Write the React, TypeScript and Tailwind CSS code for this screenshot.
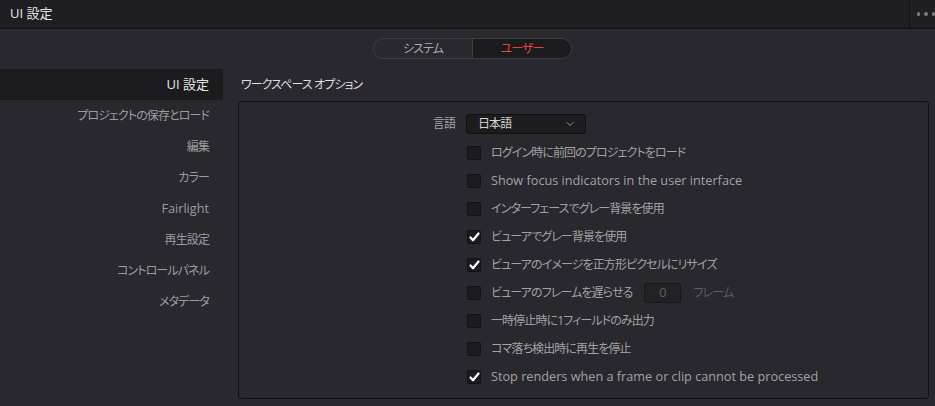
import { ChevronDown } from "lucide-react";

const font = { fontFamily: '"Open Sans", "Noto Sans CJK JP", sans-serif' };

// Japanese labels are set a touch tighter than the Latin ones
const isJp = (s: string) => /[\u3040-\u30ff\u4e00-\u9fff]/.test(s) && !s.startsWith("UI");
const jp = "text-[12px] tracking-[-0.9px]";

const sideItems = [
  "UI 設定",
  "プロジェクトの保存とロード",
  "編集",
  "カラー",
  "Fairlight",
  "再生設定",
  "コントロールパネル",
  "メタデータ",
];

const options: { label: string; checked: boolean; frames?: boolean }[] = [
  { label: "ログイン時に前回のプロジェクトをロード", checked: false },
  { label: "Show focus indicators in the user interface", checked: false },
  { label: "インターフェースでグレー背景を使用", checked: false },
  { label: "ビューアでグレー背景を使用", checked: true },
  { label: "ビューアのイメージを正方形ピクセルにリサイズ", checked: true },
  { label: "ビューアのフレームを遅らせる", checked: false, frames: true },
  { label: "一時停止時に1フィールドのみ出力", checked: false },
  { label: "コマ落ち検出時に再生を停止", checked: false },
  { label: "Stop renders when a frame or clip cannot be processed", checked: true },
];

function Checkbox({ checked }: { checked: boolean }) {
  return (
    <div className="w-[14px] h-[14px] rounded-[2px] bg-[#1c1c1e] border border-[#121214] flex items-center justify-center shrink-0">
      {checked && (
        <svg width="11" height="10" viewBox="0 0 11 10">
          <path d="M1.5 5.5 L4 8.3 L9.5 1.5" stroke="#fff" strokeWidth="2.2" fill="none" strokeLinecap="round" strokeLinejoin="round" />
        </svg>
      )}
    </div>
  );
}

export default function App() {
  return (
    <div
      className="w-[935px] h-[406px] bg-[#28282e] text-[#a7a7a9] overflow-hidden flex flex-col text-[12.7px] [font-feature-settings:'palt']"
      style={font}
    >
      {/* title bar */}
      <div className="h-[29px] bg-[#1f1f23] border-b border-[#121214] flex items-stretch shrink-0">
        <div className="flex-1 flex items-center pl-[10px] text-[13px] text-[#e6e6e6]">UI 設定</div>
        <div className="w-[26px] border-l border-[#121214] flex items-center gap-[4px] pl-[7px]">
          <span className="w-[4px] h-[4px] rounded-full bg-[#7d7d80]" />
          <span className="w-[4px] h-[4px] rounded-full bg-[#7d7d80]" />
          <span className="w-[4px] h-[4px] rounded-full bg-[#7d7d80]" />
        </div>
      </div>

      {/* segmented switch */}
      <div className="flex justify-center pt-[9px] pl-[10px]">
        <div className={`flex h-[21px] w-[199px] rounded-full border border-[#3c3c42] overflow-hidden ${jp}`}>
          <div className="w-[99px] flex items-center justify-center text-[#a9a9ab] border-r border-[#3c3c42]">システム</div>
          <div className="flex-1 flex items-center justify-center bg-[#1b1b1e] text-[#e6453a]">ユーザー</div>
        </div>
      </div>

      <div className="flex flex-1 pt-[10px]">
        {/* sidebar */}
        <div className="w-[223px] shrink-0 flex flex-col">
          {sideItems.map((s, i) => (
            <div
              key={s}
              className={`h-[31px] flex items-center justify-end pr-[14px] ${
                i === 0 ? "bg-[#1b1b1e] text-[#e8e8e8] text-[13px]" : "text-[#9c9c9f]"
              } ${isJp(s) ? jp : ""}`}
            >
              {s}
            </div>
          ))}
        </div>

        {/* content */}
        <div className="flex-1 flex flex-col pl-[15px] pr-[6px]">
          <div className={`h-[32px] flex items-center pl-[3px] text-[#dedede] ${jp}`}>ワークスペース オプション</div>
          <div className="h-[298px] border border-[#121214] rounded-[3px] pl-[228px] pt-[12px]">
            <div className="flex items-center h-[20px] -ml-[101px]">
              <span className={`w-[100px] text-right pr-[11px] text-[#a7a7a9] ${jp}`}>言語</span>
              <div className="w-[120px] h-[20px] bg-[#1c1c1f] border border-[#111113] rounded-[3px] flex items-center justify-between pl-[11px] pr-[9px] text-[#d6d6d6]">
                <span className={jp}>日本語</span>
                <ChevronDown size={12} strokeWidth={2} className="text-[#9a9a9c]" />
              </div>
            </div>
            <div className="flex flex-col mt-[5px]">
              {options.map((o) => (
                <div key={o.label} className="h-[28px] flex items-center gap-[10px]">
                  <Checkbox checked={o.checked} />
                  <span className={`text-[#a2a2a5] ${isJp(o.label) ? jp : ""}`}>{o.label}</span>
                  {o.frames && (
                    <div className="flex items-center gap-[12px] ml-[2px]">
                      <div className="w-[37px] h-[20px] bg-[#222226] border border-[#18181b] rounded-[3px] flex items-center justify-center text-[#5d5d62]">0</div>
                      <span className={`text-[#5d5d62] ${jp}`}>フレーム</span>
                    </div>
                  )}
                </div>
              ))}
            </div>
          </div>
        </div>
      </div>
    </div>
  );
}
